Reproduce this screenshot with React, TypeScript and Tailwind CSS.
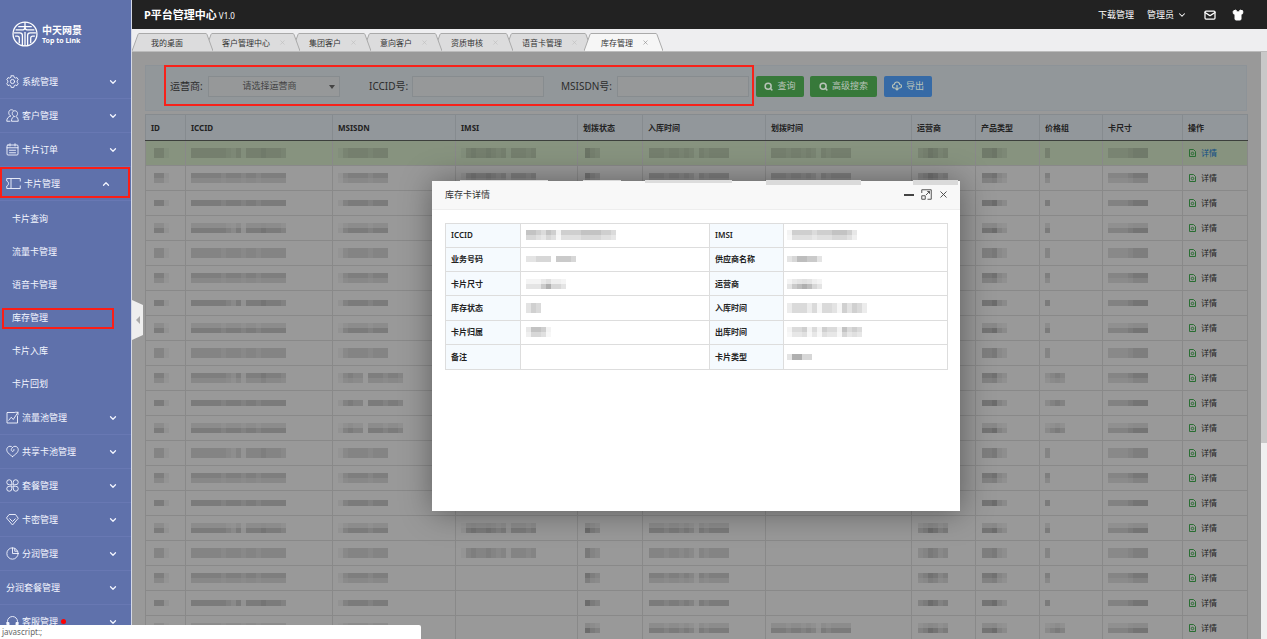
import { useState, type ReactNode } from 'react';
import { ChevronDown, ChevronUp, Mail, Search, Shirt, X } from 'lucide-react';

type MenuEntry = {
  label: string;
  icon?: ReactNode;
  children?: string[];
  dot?: boolean;
};

function Icon({ children }: { children: ReactNode }) {
  return (
    <svg
      viewBox="0 0 26 26"
      className="size-[13px] shrink-0"
      fill="none"
      stroke="currentColor"
      strokeWidth="1.8"
      strokeLinejoin="round"
      strokeLinecap="round"
    >
      {children}
    </svg>
  );
}

const MENU: MenuEntry[] = [
  {
    label: '系统管理',
    icon: (
      <Icon>
        <path d="M10.5 1.5h5l.8 3.2 2.6 1.5 3.1-1 2.5 4.3-2.3 2.2v3l2.3 2.2-2.5 4.3-3.1-1-2.6 1.5-.8 3.2h-5l-.8-3.2-2.6-1.5-3.1 1-2.5-4.3 2.3-2.2v-3L1.5 9.5 4 5.2l3.1 1 2.6-1.5z" />
        <circle cx="13" cy="13" r="4.2" />
      </Icon>
    ),
  },
  {
    label: '客户管理',
    icon: (
      <Icon>
        <path d="M9 14C7 12.5 5.500 10.500 5.500 7.500c0-4 2.500-6 5.500-6 1.500 0 2.500.5 3.500 1.500M9 14c-4 1.500-7.500 4-7.500 10.500H8" />
        <path d="M16.500 15c-2.500-1.500-4-3-4-6 0-3.500 2-5.500 5-5.500s5.500 2 5.500 5.500c0 2.500-1 4.500-3.500 6 3 1 5 4 5 9.500H11c0-6 2-8.500 5.500-9.500z" />
      </Icon>
    ),
  },
  {
    label: '卡片订单',
    icon: (
      <Icon>
        <rect x="2" y="4" width="22" height="20" rx="2" />
        <path d="M2 9.5h22M8 1.5V6M18 1.5V6M7 14.5h12M7 19.5h12" />
      </Icon>
    ),
  },
  {
    label: '卡片管理',
    icon: (
      <svg
        viewBox="0 0 30 26"
        className="h-[13px] w-[15px] shrink-0"
        fill="none"
        stroke="currentColor"
        strokeWidth="1.8"
        strokeLinejoin="round"
      >
        <path d="M10 3H1.500v5C4 9 5 11 5 13s-1 4-3.500 5v5H10M10 3v20M10 3h18.500v6M10 23h18.500v-6" />
      </svg>
    ),
    children: ['卡片查询', '流量卡管理', '语音卡管理', '库存管理', '卡片入库', '卡片回划'],
  },
  {
    label: '流量池管理',
    icon: (
      <Icon>
        <path d="M17 3H2v21h21V10" />
        <path d="M5.5 18.5l5-6 4 4.500L24 2.500M19 2.500h5v5" />
      </Icon>
    ),
  },
  {
    label: '共享卡池管理',
    icon: (
      <Icon>
        <path d="M13 23C6 18.500 1.500 14 1.500 9.500c0-4 3-7 6.500-7 2 0 4 1 5 2.500 1-1.500 3-2.500 5-2.500 3.500 0 6.500 3 6.500 7 0 4.500-4.500 9-11.500 13.500z" />
        <path d="M13 5c-3 2-3.500 6-1 7.500 2.500 1 4.500-1 4-3.500" />
      </Icon>
    ),
  },
  {
    label: '套餐管理',
    icon: (
      <Icon>
        <path d="M11.500 11.500H7a5 5 0 1 1 4.500-4.500zM14.500 11.500V7a5 5 0 1 1 4.500 4.500zM11.500 14.500V19A5 5 0 1 1 7 14.500zM14.500 14.500H19a5 5 0 1 1-4.500 4.500z" />
      </Icon>
    ),
  },
  {
    label: '卡密管理',
    icon: (
      <Icon>
        <path d="M7 3h12l5.500 7.500L13 24 1.500 10.500z" />
        <path d="M7.500 11.500L13 17l5.500-5.500" />
      </Icon>
    ),
  },
  {
    label: '分润管理',
    icon: (
      <Icon>
        <circle cx="13" cy="13" r="11.3" />
        <path d="M13 1.700V13h11.300M17.500 3v5.500H23" />
      </Icon>
    ),
  },
  { label: '分润套餐管理' },
  {
    label: '客服管理',
    dot: true,
    icon: (
      <Icon>
        <path d="M3 17v-4a10 10 0 0 1 20 0v4" />
        <path d="M2 15h4v8H4a2 2 0 0 1-2-2zM24 15h-4v8h2a2 2 0 0 0 2-2z" fill="currentColor" />
      </Icon>
    ),
  },
];

const TABS = ['我的桌面', '客户管理中心', '集团客户', '意向客户', '资质审核', '语音卡管理', '库存管理'];

const COLUMNS = [
  { title: 'ID', width: 40, pad: 'pl-2' },
  { title: 'ICCID', width: 147, pad: 'pl-[5px]' },
  { title: 'MSISDN', width: 123, pad: 'pl-[5px]' },
  { title: 'IMSI', width: 122, pad: 'pl-[5px]' },
  { title: '划拨状态', width: 65, pad: 'pl-[7px]' },
  { title: '入库时间', width: 123, pad: 'pl-[6px]' },
  { title: '划拨时间', width: 146, pad: 'pl-[5px]' },
  { title: '运营商', width: 64, pad: 'pl-[6px]' },
  { title: '产品类型', width: 64, pad: 'pl-[6px]' },
  { title: '价格组', width: 63, pad: 'pl-[5px]' },
  { title: '卡尺寸', width: 80, pad: 'pl-[5px]' },
];

// Digits are darkness levels of the masked value, one per block
const TIME = '4443443431434444';

const ROWS = Array.from({ length: 20 }, (_, i) => {
  const wide = i >= 9 && i <= 11;
  return [
    '441',
    i % 3 === 0 ? '4444444324144454443' : '4444443444344344444',
    wide ? '1343304443443' : '1344443444',
    i < 17 ? '145445434144434' : '',
    '643',
    TIME,
    i < 15 || i === 19 ? TIME : '',
    '346534',
    '55632',
    wide || i === 19 ? '2343' : '4',
    '33334555',
  ];
});

// Upper and lower strength of the two block lines, repeating every four rows
const PHASES = [
  [0.7, 0.7],
  [0.9, 0.6],
  [1, 0],
  [0.4, 1],
];

function Mosaic({ levels, phase = 0 }: { levels: string; phase?: number }) {
  if (!levels) return null;
  const [top, bottom] = PHASES[phase % 4];
  const single = bottom === 0;
  return (
    <svg width={levels.length * 5} height="10" className="block" aria-hidden="true">
      {levels.split('').map((d, i) => (
        <g key={i} fill="#1a1a1a">
          <rect x={i * 5} y={single ? 2 : 0} width="5" height={single ? 6 : 5} opacity={Number(d) * 0.058 * top} />
          <rect x={i * 5} y="5" width="5" height="5" opacity={Number(d) * 0.058 * bottom} />
        </g>
      ))}
    </svg>
  );
}

function Logo() {
  return (
    <div className="flex items-center gap-[4px] pl-[12px] pt-[21px] pb-[18px]">
      <svg viewBox="0 0 50 50" className="size-[26px]" fill="none" stroke="white" strokeWidth="2.5">
        <circle cx="25" cy="25" r="23" />
        <path d="M12 11h26M7 17h14c3 0 4-3 4-6 0 3 1 6 4 6h14M4 23h11c3 0 5 2 5 5v19M46 23H35c-3 0-5 2-5 5v19M6 29h4c3 0 4 2 4 4v10M44 29h-4c-3 0-4 2-4 4v10M25 2v9M25 21v27" />
      </svg>
      <div className="font-bold text-white">
        <div className="text-[10px] leading-[12px]">中天网景</div>
        <div className="text-[7px] leading-[9px]">Top to Link</div>
      </div>
    </div>
  );
}

function Sidebar() {
  const [current, setCurrent] = useState('库存管理');
  return (
    <aside className="w-[132px] shrink-0 overflow-hidden border-r border-[#d5d9e6] bg-[#5f71ab] text-[9px] text-[#f4f6ff]">
      <Logo />
      <nav>
        {MENU.map((item) => (
          <div key={item.label}>
            <button
              className={`relative flex h-[34px] w-full items-center gap-[3px] border-b border-[#6878b3] pl-[6px] ${
                item.children ? 'pr-[20px]' : 'pr-[13px]'
              }`}
            >
              {item.icon}
              <span>{item.label}</span>
              {item.dot && <span className="size-[5px] rounded-full bg-[#f00]" />}
              {item.children ? (
                <ChevronUp className="ml-auto size-[10px]" strokeWidth={3} />
              ) : (
                <ChevronDown className="ml-auto size-[10px]" strokeWidth={3} />
              )}
              {item.children && <span className="absolute top-0 right-px left-0 h-[31px] border-2 border-[#fb1d16]" />}
            </button>
            {item.children && (
              <ul className="py-px">
                {item.children.map((sub) => (
                  <li key={sub}>
                    <button
                      onClick={() => setCurrent(sub)}
                      className="relative flex h-[33px] w-full items-center pl-[12px]"
                    >
                      {sub}
                      {sub === current && (
                        <span className="absolute top-[7px] left-[2px] h-[21px] w-[112px] border-2 border-[#fb1d16]" />
                      )}
                    </button>
                  </li>
                ))}
              </ul>
            )}
          </div>
        ))}
      </nav>
    </aside>
  );
}

function Header() {
  return (
    <header className="flex h-[29px] shrink-0 items-center bg-[#222] pr-[23px] pl-[12px] text-white">
      <h1 className="text-[11px] font-bold">P平台管理中心</h1>
      <span className="ml-[2px] pt-[3px] text-[8px]">V1.0</span>
      <div className="ml-auto flex items-center text-[9px]">
        <a href="#download">下载管理</a>
        <button className="ml-[13px] flex items-center gap-[3px]">
          管理员
          <ChevronDown className="size-[10px]" strokeWidth={2.5} />
        </button>
        <button aria-label="消息" className="ml-[17px]">
          <Mail className="size-[12px]" strokeWidth={2.5} />
        </button>
        <button aria-label="皮肤" className="ml-[16px]">
          <Shirt className="size-[12px]" fill="currentColor" />
        </button>
      </div>
    </header>
  );
}

function TabBar() {
  const [active, setActive] = useState(TABS.length - 1);
  return (
    <div className="flex h-[23px] shrink-0 items-end border-b border-[#bbb] bg-[#eeeef0] text-[8px] text-[#333]">
      {TABS.map((tab, i) => {
        const on = i === active;
        const fill = on ? '#f6f6f6' : '#dcdcdd';
        return (
          <button
            key={tab}
            onClick={() => setActive(i)}
            style={{ zIndex: on ? 20 : 10 - i }}
            className="relative -mr-[8px] flex h-[18px]"
          >
            <svg width="7" height="18" className="shrink-0" fill={fill}>
              <path d="M0 18L6 1.5Q6.5.5 7 .5V18z" />
              <path d="M0 18L6 1.5Q6.5.5 7 .5" fill="none" stroke="#aaa" />
            </svg>
            <span
              className={`flex h-full items-center border-t border-[#aaa] ${on ? 'bg-[#f6f6f6]' : 'bg-[#dcdcdd]'} ${
                i === 0 ? 'pr-[23px] pl-[12px]' : 'pr-[7px] pl-[10px]'
              }`}
            >
              {tab}
              {i > 0 && <X className={`ml-[9px] size-[7px] ${on ? 'text-[#888]' : 'text-[#bbb]'}`} />}
            </span>
            <svg width="7" height="18" className="shrink-0" fill={fill}>
              <path d="M7 18L1 1.5Q.5.5 0 .5V18z" />
              <path d="M7 18L1 1.5Q.5.5 0 .5" fill="none" stroke="#aaa" />
            </svg>
          </button>
        );
      })}
    </div>
  );
}

function FilterBar() {
  const field = 'h-[21px] w-[132px] border border-[#878c8f] bg-[#969899] text-[9px] text-[#444] outline-none';
  const button = 'flex h-[21px] items-center justify-center gap-[4px] rounded-[2px] text-[9px] text-[#b9c4b9]';
  return (
    <form
      className="relative flex h-[46px] items-center border border-[#8d9398] bg-[#92979a] pb-[4px] pl-[24px] text-[10px] text-[#2c2c2c]"
      onSubmit={(e) => e.preventDefault()}
    >
      <label htmlFor="operator" className="w-[38px] shrink-0">运营商:</label>
      <div className="relative">
        <select id="operator" className={`${field} block appearance-none pr-[9px] text-center text-[#5a5a5a]`}>
          <option>请选择运营商</option>
        </select>
        <svg viewBox="0 0 6 4" className="pointer-events-none absolute top-[9px] right-[5px] h-[4px] w-[6px]" fill="#444">
          <path d="M0 0h6L3 4z" />
        </svg>
      </div>
      <label htmlFor="iccid" className="ml-[29px] w-[43px] shrink-0">ICCID号:</label>
      <input id="iccid" className={field} />
      <label htmlFor="msisdn" className="ml-[17px] w-[56px] shrink-0">MSISDN号:</label>
      <input id="msisdn" className={field} />
      <button className={`${button} ml-[7px] w-[48px] bg-[#37793a]`}>
        <Search className="size-[9px]" strokeWidth={4} />
        查询
      </button>
      <button className={`${button} ml-[6px] w-[67px] bg-[#37793a]`}>
        <Search className="size-[9px]" strokeWidth={4} />
        高级搜索
      </button>
      <button className={`${button} ml-[7px] w-[48px] bg-[#366aa6]`}>
        <svg viewBox="0 0 20 20" className="size-[10px]" fill="none" stroke="currentColor" strokeWidth="2.4">
          <path d="M7 14H4.5a3.5 3.5 0 0 1 0-7C5 4 7 2 10 2s5 2 5.500 5a3.500 3.500 0 0 1 0 7H13M10 8v10M7 15l3 3 3-3" />
        </svg>
        导出
      </button>
      <span className="pointer-events-none absolute -top-px left-[18px] h-[41px] w-[590px] border-2 border-[#f8221a]" />
    </form>
  );
}

function StockTable() {
  return (
    <table className="mt-[3px] w-full table-fixed border-collapse text-[8px] text-[#222]">
      <colgroup>
        {COLUMNS.map((c) => (
          <col key={c.title} style={{ width: c.width }} />
        ))}
        <col className="w-[65px]" />
      </colgroup>
      <thead>
        <tr className="h-[26px] bg-[#92979b]">
          {[...COLUMNS.map((c) => c.title), '操作'].map((title) => (
            <th key={title} className="border border-[#868b8f] border-b-[#3c3f3c] p-0 pl-[5px] text-left font-bold">
              {title}
            </th>
          ))}
        </tr>
      </thead>
      <tbody>
        {ROWS.map((row, r) => (
          <tr key={r} className={`h-[25px] ${r === 0 ? 'bg-[#87937f]' : 'bg-[#999]'}`}>
            {row.map((levels, c) => (
              <td key={c} className={`border-x border-b border-[#898989] p-0 align-middle ${COLUMNS[c].pad}`}>
                <Mosaic levels={levels} phase={r} />
              </td>
            ))}
            <td className="border-x border-b border-[#898989] p-0 pl-[6px]">
              <a href="#detail" className={`flex items-center gap-[5px] ${r === 0 ? 'text-[#0f4d85]' : ''}`}>
                <svg viewBox="0 0 14 16" className="h-[8px] w-[7px]" fill="none" stroke="#2a6e33" strokeWidth="2">
                  <path d="M1 1h8l4 4v10H1z" />
                  <circle cx="7" cy="9" r="2.5" />
                </svg>
                详情
              </a>
            </td>
          </tr>
        ))}
      </tbody>
    </table>
  );
}

const DETAILS = [
  ['ICCID', '554354144445555443', 'IMSI', '14444344455542'],
  ['业务号码', '2233304443', '供应商名称', '2355442'],
  ['卡片尺寸', '22246332', '运营商', '2456532'],
  ['库存状态', '354', '入库时间', '2444241443153542'],
  ['卡片归属', '25541', '出库时间', '133413143315343'],
  ['备注', '', '卡片类型', '26633'],
];

function DetailDialog({ onClose }: { onClose: () => void }) {
  return (
    <div className="absolute inset-y-0 right-[7px] left-0 z-30 flex items-center justify-center">
      <section
        role="dialog"
        aria-label="库存卡详情"
        className="relative h-[330px] w-[528px] bg-white shadow-[1px_1px_30px_rgba(0,0,0,0.4)]"
      >
        <header className="flex h-[29px] items-center border-b border-[#eee] bg-[#f8f8f8] pr-[11px] pl-[13px] text-[#333]">
          <h2 className="text-[9px]">库存卡详情</h2>
          <div className="ml-auto flex items-center gap-[6px]">
            <button aria-label="最小化" className="flex size-[11px] items-center">
              <span className="h-[2px] w-[10px] bg-[#444]" />
            </button>
            <button aria-label="最大化">
              <svg viewBox="0 0 22 22" className="size-[11px]" fill="none" stroke="#444" strokeWidth="1.8">
                <path d="M1.5 8V1.5H20.500V20.500H13M1.500 13.500h7v7h-7zM10 12L17 5M12.500 5H17v4.500" />
              </svg>
            </button>
            <button aria-label="关闭" onClick={onClose}>
              <X className="size-[11px] text-[#444]" strokeWidth={2} />
            </button>
          </div>
        </header>
        <div className="p-[13px]">
          <table className="h-[147px] w-full table-fixed border-collapse text-[8px] text-[#222]">
            <colgroup>
              <col className="w-[75px]" />
              <col className="w-[189px]" />
              <col className="w-[74px]" />
              <col className="w-[164px]" />
            </colgroup>
            <tbody>
              {DETAILS.map(([a, av, b, bv], i) => (
                <tr key={a}>
                  <th className="border border-[#ddd] bg-[#f5fafe] p-0 pl-[5px] text-left font-semibold">{a}</th>
                  <td className="border border-[#ddd] p-0 pl-[5px]"><Mosaic levels={av} phase={i + 1} /></td>
                  <th className="border border-[#ddd] bg-[#f5fafe] p-0 pl-[5px] text-left font-semibold">{b}</th>
                  <td className="border border-[#ddd] p-0 pl-[3px]"><Mosaic levels={bv} phase={i + 1} /></td>
                </tr>
              ))}
            </tbody>
          </table>
        </div>
        {/* Smeared edges left by the masked cells under the title bar */}
        <span className="absolute -top-px left-[28px] h-px w-[88px] bg-[#d8d8d8]" />
        <span className="absolute -top-px left-[151px] h-px w-[38px] bg-[#d8d8d8]" />
        <span className="absolute -top-px left-[213px] h-[3px] w-[87px] bg-[#dcdcdc]" />
        <span className="absolute -top-px left-[334px] h-[5px] w-[95px] bg-[#dadada]" />
        <span className="absolute -top-px left-[481px] h-[5px] w-[45px] bg-[#dadada]" />
      </section>
    </div>
  );
}

export default function App() {
  const [detailOpen, setDetailOpen] = useState(true);

  return (
    <div className='relative flex h-screen overflow-hidden font-["Noto_Sans","Noto_Sans_CJK_SC",sans-serif] leading-[14px]'>
      <Sidebar />
      <div className="flex min-w-0 flex-1 flex-col">
        <Header />
        <TabBar />
        <main className="relative flex min-h-0 flex-1 overflow-hidden bg-[#999]">
          <div className="min-w-0 flex-1 overflow-hidden pt-[13px] pr-[14px] pl-[13px]">
            <FilterBar />
            <StockTable />
          </div>
          <div className="w-[6px] shrink-0 bg-[#f0f0f0]">
            <div className="h-2/3 bg-[#c8c8c8]" />
          </div>
          <button aria-label="收起菜单" className="absolute top-[248px] left-0 h-[40px] w-[11px]">
            <svg viewBox="0 0 11 40" className="h-full w-full" fill="#eee">
              <path d="M0 0l11 5v30L0 40z" />
              <path d="M8 16v8l-4-4z" fill="#aaa" />
            </svg>
          </button>
          {detailOpen && <DetailDialog onClose={() => setDetailOpen(false)} />}
        </main>
      </div>
      <div className="absolute bottom-0 left-0 z-40 h-[14px] w-[421px] rounded-tr-[2px] bg-white pl-[2px] text-[8px] text-[#666]">
        javascript:;
      </div>
    </div>
  );
}
